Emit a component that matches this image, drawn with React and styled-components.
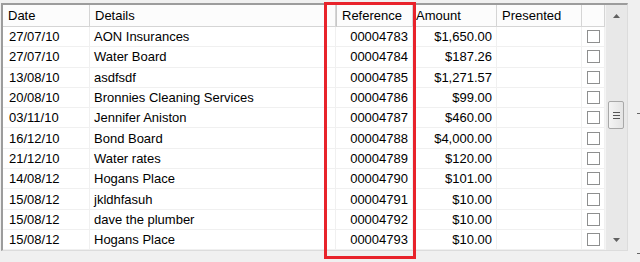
import React from 'react';
import styled, { createGlobalStyle } from 'styled-components';

const Global = createGlobalStyle`
  html, body { margin: 0; padding: 0; background: #f0f0f0; }
  body { font-family: "Liberation Sans", Arial, sans-serif; font-size: 13px; color: #000; }
`;

const Page = styled.div`
  position: relative;
  width: 640px;
  height: 262px;
  overflow: hidden;
  padding: 3px 0 0 1px;
  box-sizing: border-box;
`;

const Frame = styled.div`
  display: flex;
  width: 627px;
  height: 248px;
  border-top: 2px solid #9c9c9c;
  border-left: 2px solid #9c9c9c;
  border-right: 1px solid #dcdcdc;
  border-bottom: 1px solid #dcdcdc;
  background: #fff;
  box-sizing: border-box;
`;

const Table = styled.div`
  display: grid;
  grid-template-columns: 87px 246px 77px 84px 85px 23px;
  grid-auto-rows: 20.3px;
  grid-template-rows: 22px;
  align-content: start;
  flex: none;
`;

const HeadCell = styled.div`
  display: flex;
  align-items: center;
  padding-left: ${p => p.$pl ?? 5}px;
  background: #fcfcfc;
  border-right: 1px solid #d5d5d5;
  border-bottom: 1px solid #d5d5d5;
  border-left: ${p => (p.$mark ? '1px solid #c8c8c8' : 'none')};
  box-sizing: border-box;
  white-space: nowrap;
`;

const Cell = styled.div`
  display: flex;
  align-items: center;
  justify-content: ${p => p.$align || 'flex-start'};
  padding: 0 ${p => (p.$align === 'flex-end' ? 4 : 0)}px 0 ${p => (p.$align ? 0 : p.$pl ?? 5)}px;
  border-right: 1px solid #f0f0f0;
  border-bottom: 1px solid #f0f0f0;
  box-sizing: border-box;
  white-space: nowrap;
  overflow: hidden;
`;

const Check = styled.span`
  width: 13px;
  height: 13px;
  border: 1px solid #8e8f8f;
  background: #fff;
  box-sizing: border-box;
`;

const Scrollbar = styled.div`
  width: 21px;
  flex: none;
  background: #e8e8e8;
  border-left: 1px solid #f4f4f4;
  display: flex;
  flex-direction: column;
  align-items: center;
`;

const Arrow = styled.div`
  height: 21px;
  width: 100%;
  display: flex;
  align-items: center;
  justify-content: center;
`;

const Track = styled.div`
  flex: 1;
  width: 100%;
  position: relative;
`;

const Thumb = styled.div`
  position: absolute;
  top: 75px;
  left: 2px;
  width: 16px;
  height: 28px;
  box-sizing: border-box;
  border: 1px solid #a8a8a8;
  border-radius: 2px;
  background: linear-gradient(to right, #f4f4f4, #e4e4e4);
  display: flex;
  flex-direction: column;
  align-items: center;
  justify-content: center;
  gap: 2px;
`;

const Grip = styled.span`
  width: 7px;
  height: 1px;
  background: #555;
`;

const Highlight = styled.div`
  position: absolute;
  left: 324px;
  top: 2px;
  width: 92px;
  height: 257px;
  border: 3px solid #e8232b;
  box-sizing: border-box;
  pointer-events: none;
`;

const Tick = styled.div`
  position: absolute;
  right: 0;
  top: ${p => p.$top}px;
  width: 3px;
  height: 1px;
  background: #666;
`;

const rows = [
  ['27/07/10', 'AON Insurances', '00004783', '$1,650.00'],
  ['27/07/10', 'Water Board', '00004784', '$187.26'],
  ['13/08/10', 'asdfsdf', '00004785', '$1,271.57'],
  ['20/08/10', 'Bronnies Cleaning Services', '00004786', '$99.00'],
  ['03/11/10', 'Jennifer Aniston', '00004787', '$460.00'],
  ['16/12/10', 'Bond Board', '00004788', '$4,000.00'],
  ['21/12/10', 'Water rates', '00004789', '$120.00'],
  ['14/08/12', 'Hogans Place', '00004790', '$101.00'],
  ['15/08/12', 'jkldhfasuh', '00004791', '$10.00'],
  ['15/08/12', 'dave the plumber', '00004792', '$10.00'],
  ['15/08/12', 'Hogans Place', '00004793', '$10.00'],
];

const App = () => (
  <Page>
    <Global />
    <Frame>
      <Table>
        <HeadCell>Date</HeadCell>
        <HeadCell>Details</HeadCell>
        <HeadCell $mark>Reference</HeadCell>
        <HeadCell $pl={3}>Amount</HeadCell>
        <HeadCell>Presented</HeadCell>
        <HeadCell />
        {rows.map(([date, details, ref, amount], i) => (
          <React.Fragment key={i}>
            <Cell $pl={6}>{date}</Cell>
            <Cell $pl={4}>{details}</Cell>
            <Cell $align="flex-end">{ref}</Cell>
            <Cell $align="flex-end">{amount}</Cell>
            <Cell />
            <Cell $align="center"><Check /></Cell>
          </React.Fragment>
        ))}
      </Table>
      <Scrollbar>
        <Arrow>
          <svg width="7" height="4" viewBox="0 0 7 4"><path d="M3.5 0L7 4H0z" fill="#606060" /></svg>
        </Arrow>
        <Track>
          <Thumb><Grip /><Grip /><Grip /></Thumb>
        </Track>
        <Arrow>
          <svg width="7" height="4" viewBox="0 0 7 4"><path d="M0 0H7L3.5 4z" fill="#606060" /></svg>
        </Arrow>
      </Scrollbar>
    </Frame>
    <Tick $top={113} />
    <Tick $top={253} />
    <Highlight />
  </Page>
);

export default App;
